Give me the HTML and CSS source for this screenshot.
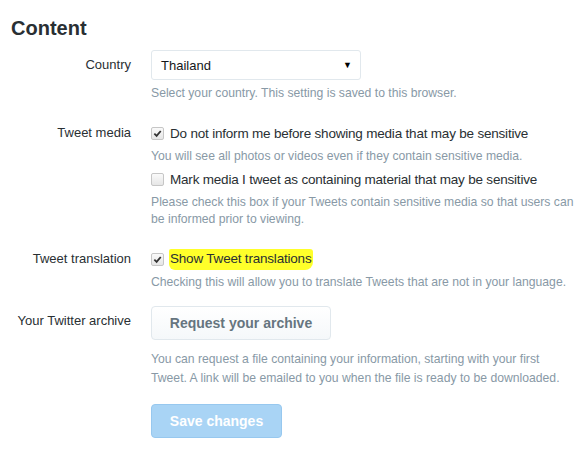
FILE: index.html
```html
<!DOCTYPE html>
<html>
<head>
<meta charset="utf-8">
<link rel="stylesheet" href="styles.css">
</head>
<body>
<div class="page">
  <h2 class="title">Content</h2>

  <div class="row row-country">
    <div class="label">Country</div>
    <div class="field">
      <div class="select"><span>Thailand</span><span class="caret">&#9660;</span></div>
      <p class="help">Select your country. This setting is saved to this browser.</p>
    </div>
  </div>

  <div class="row row-media">
    <div class="label">Tweet media</div>
    <div class="field">
      <div class="check"><span class="box checked"><svg viewBox="0 0 10 10" width="9" height="9"><path d="M1.5 5.2 L4 7.6 L8.6 2.2" fill="none" stroke="#333" stroke-width="2"/></svg></span><span class="ctext">Do not inform me before showing media that may be sensitive</span></div>
      <p class="help">You will see all photos or videos even if they contain sensitive media.</p>
      <div class="check"><span class="box"></span><span class="ctext">Mark media I tweet as containing material that may be sensitive</span></div>
      <p class="help">Please check this box if your Tweets contain sensitive media so that users can be informed prior to viewing.</p>
    </div>
  </div>

  <div class="row row-trans">
    <div class="label">Tweet translation</div>
    <div class="field">
      <div class="check"><span class="box checked"><svg viewBox="0 0 10 10" width="9" height="9"><path d="M1.5 5.2 L4 7.6 L8.6 2.2" fill="none" stroke="#333" stroke-width="2"/></svg></span><span class="ctext hl">Show Tweet translations</span></div>
      <p class="help">Checking this will allow you to translate Tweets that are not in your language.</p>
    </div>
  </div>

  <div class="row row-archive">
    <div class="label">Your Twitter archive</div>
    <div class="field">
      <button class="btn">Request your archive</button>
      <p class="help">You can request a file containing your information, starting with your first Tweet. A link will be emailed to you when the file is ready to be downloaded.</p>
    </div>
  </div>

  <div class="row row-save">
    <div class="label"></div>
    <div class="field">
      <button class="btn-save">Save changes</button>
    </div>
  </div>
</div>
</body>
</html>
```

FILE: styles.css
```css
* { box-sizing: border-box; }
html, body { margin: 0; background: #fff; }
body {
  font-family: "Liberation Sans", Arial, sans-serif;
  color: #292f33;
  font-size: 14px;
}
.page { padding: 16px 0 0 11px; }
.title {
  margin: 0;
  font-size: 20px;
  font-weight: bold;
  line-height: 24px;
  color: #292f33;
}
.row {
  display: flex;
  gap: 20px;
}
.label {
  width: 120px;
  flex: none;
  text-align: right;
  font-size: 13px;
  line-height: 18px;
  color: #292f33;
}
.field { width: 426px; }
.help {
  margin: 0;
  font-size: 12.2px;
  line-height: 17px;
  color: #8899a6;
}
.row-country { margin-top: 10px; }
.row-country .label { padding-top: 6px; }
.select {
  width: 210px;
  height: 30px;
  border: 1px solid #e1e8ed;
  border-radius: 3px;
  display: flex;
  align-items: center;
  justify-content: space-between;
  padding: 0 8px 0 9px;
  font-size: 13px;
  color: #14171a;
}
.caret { font-size: 9px; color: #000; }
.row-country .help { margin-top: 5px; }

.row-media { margin-top: 22px; }
.check {
  display: flex;
  align-items: center;
  height: 18px;
  font-size: 13.5px;
  letter-spacing: -0.2px;
  color: #292f33;
}
.box {
  width: 13px; height: 13px;
  border: 1px solid #c6c6c6;
  border-radius: 2px;
  background: linear-gradient(#fafafa, #e6e6e6);
  margin-right: 6px;
  display: flex;
  align-items: center;
  justify-content: center;
  flex: none;
}
.row-media .help { margin-top: 6px; margin-bottom: 5px; }
.row-media .help:last-child { margin-bottom: 0; }

.row-trans { margin-top: 22px; }
.row-trans .help { margin-top: 6px; }
.hl {
  background: #ffff2a;
  padding: 2px 2px 4px 1px;
  margin-left: -1px;
  border-radius: 2px 3px 8px 6px;
}

.row-archive { margin-top: 15px; }
.row-archive .label { padding-top: 6px; }
.btn {
  width: 180px;
  height: 34px;
  border: 1px solid #e1e8ed;
  border-radius: 4px;
  background: linear-gradient(#fff, #f5f8fa);
  font-family: inherit;
  font-size: 14px;
  font-weight: bold;
  color: #66757f;
  padding: 0;
}
.row-archive .help { margin-top: 10px; line-height: 19px; }

.row-save { margin-top: 16px; }
.btn-save {
  width: 131px;
  height: 34px;
  border: 1px solid #97c8ef;
  border-radius: 4px;
  background: #a9d4f5;
  color: #fff;
  font-family: inherit;
  font-size: 14px;
  font-weight: bold;
  padding: 0;
}
```
